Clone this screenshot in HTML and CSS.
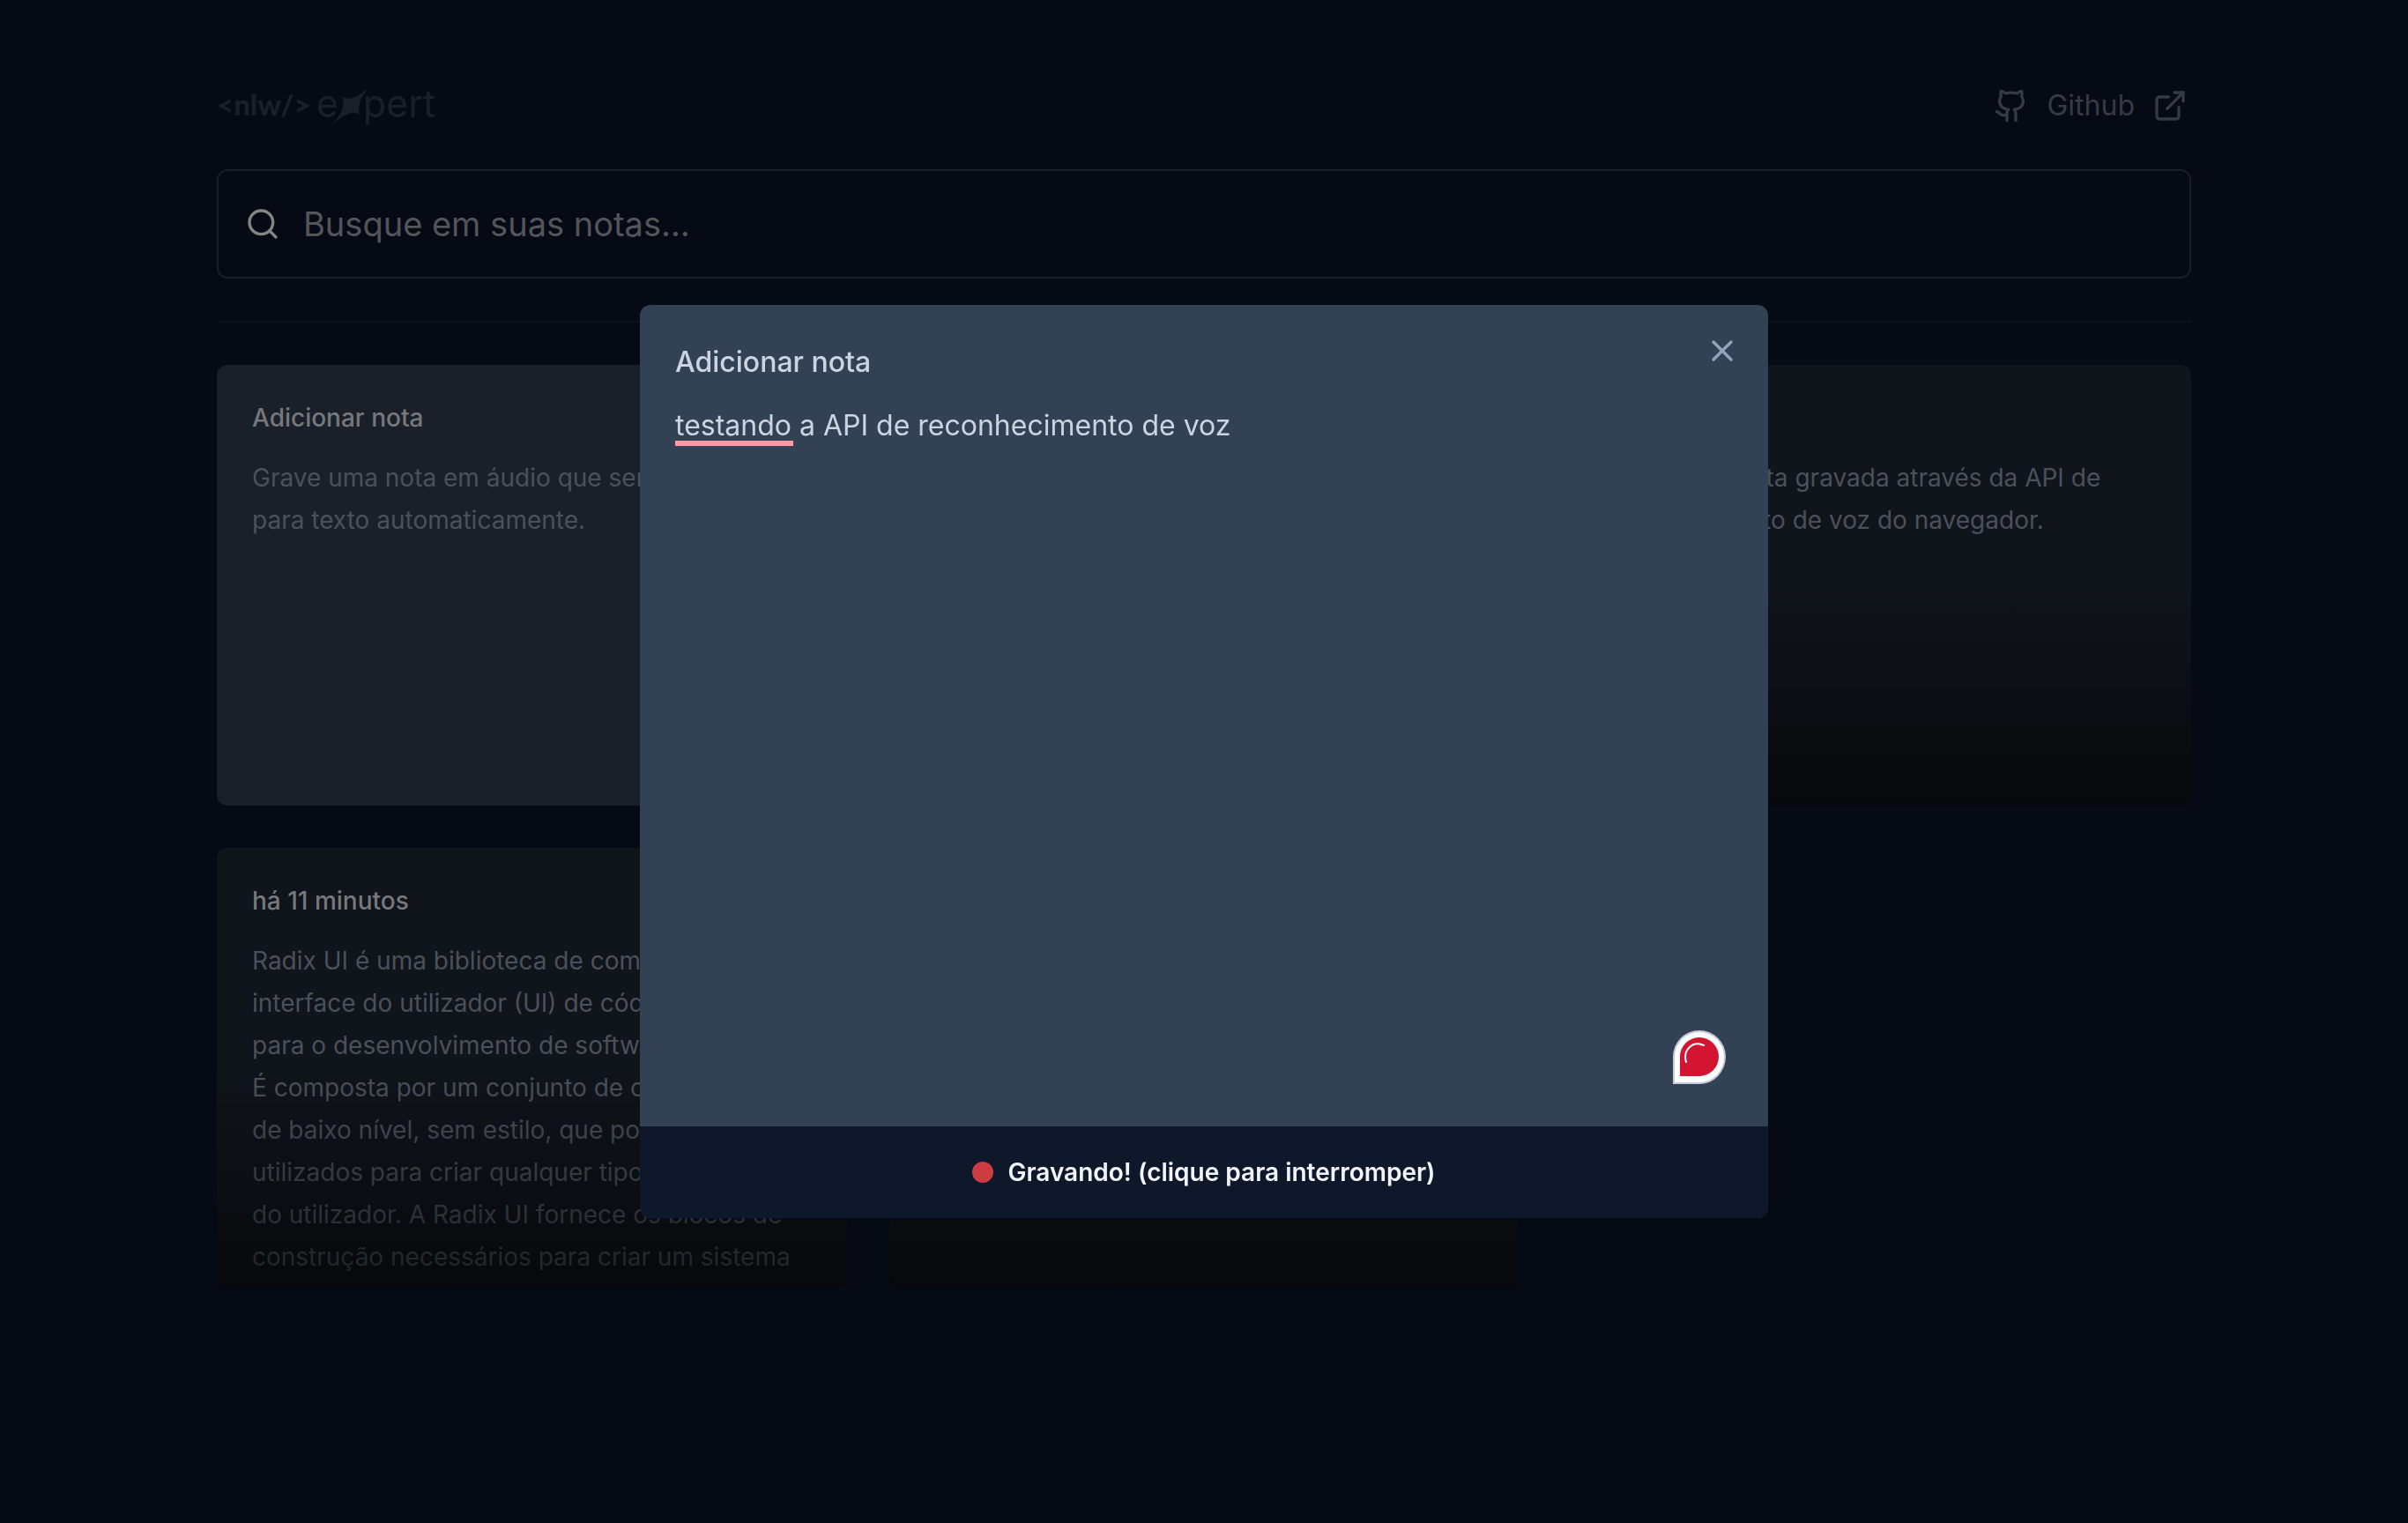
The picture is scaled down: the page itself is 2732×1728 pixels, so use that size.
FILE: index.html
```html
<!DOCTYPE html>
<html lang="pt-BR">
<head>
<meta charset="utf-8">
<meta name="viewport" content="width=device-width, initial-scale=1">
<title>NLW Expert Notes</title>
<link rel="stylesheet" href="styles.css">
</head>
<body>
<div class="page">
  <header class="header">
    <div class="logo">
      <span class="logo-tag">&lt;nlw/&gt;</span>
      <span class="logo-word">
        <span>e</span>
        <svg class="logo-star" viewBox="0 0 130 132" aria-hidden="true"><path d="M130 0Q76 62 98 97Q64 73 0 132Q56 70 33 33Q66 60 130 0Z"/></svg>
        <span>pert</span>
      </span>
    </div>
    <a class="github" href="#">
      <svg class="icon" viewBox="0 0 24 24" aria-hidden="true"><path d="M15 22v-4a4.8 4.8 0 0 0-1-3.5c3 0 6-2 6-5.5.08-1.25-.27-2.48-1-3.5.28-1.15.28-2.35 0-3.5 0 0-1 0-3 1.5-2.64-.5-5.36-.5-8 0C6 2 5 2 5 2c-.3 1.15-.3 2.35 0 3.5A5.403 5.403 0 0 0 4 9c0 3.5 3 5.5 6 5.5-.39.49-.68 1.05-.85 1.65-.17.6-.22 1.23-.15 1.85v4"/><path d="M9 18c-4.51 2-5-2-7-2"/></svg>
      <span>Github</span>
      <svg class="icon" viewBox="0 0 24 24" aria-hidden="true"><path d="M18 13v6a2 2 0 0 1-2 2H5a2 2 0 0 1-2-2V8a2 2 0 0 1 2-2h6"/><path d="M15 3h6v6"/><path d="M10 14 21 3"/></svg>
    </a>
  </header>

  <form class="search">
    <svg class="icon search-icon" viewBox="0 0 24 24" aria-hidden="true"><circle cx="11" cy="11" r="8"/><path d="m21 21-4.300-4.300"/></svg>
    <input class="search-input" type="text" placeholder="Busque em suas notas..." aria-label="Busque em suas notas">
  </form>

  <hr class="divider">

  <main class="grid">
    <article class="card card-new">
      <h2 class="card-title">Adicionar nota</h2>
      <p class="card-text">Grave uma nota em áudio que será convertida para texto automaticamente.</p>
    </article>
    <article class="card card-note">
      <h2 class="card-title">há 1 minuto</h2>
    </article>
    <article class="card card-note">
      <h2 class="card-title">há 5 minutos</h2>
      <p class="card-text">Essa é uma nota gravada através da API de reconhecimento de voz do navegador.</p>
    </article>
    <article class="card card-note">
      <h2 class="card-title">há 11 minutos</h2>
      <p class="card-text">Radix UI é uma biblioteca de componentes de interface do utilizador (UI) de código aberto para o desenvolvimento de software.<br>É composta por um conjunto de componentes de baixo nível, sem estilo, que podem ser utilizados para criar qualquer tipo de interface do utilizador. A Radix UI fornece os blocos de construção necessários para criar um sistema</p>
    </article>
    <article class="card card-note">
      <h2 class="card-title">há 15 minutos</h2>
    </article>
  </main>
</div>

<div class="overlay">
  <section class="modal" role="dialog" aria-modal="true" aria-labelledby="modal-title">
    <button class="close" type="button" aria-label="Fechar">
      <svg class="icon" viewBox="0 0 24 24" aria-hidden="true"><path d="M18 6 6 18"/><path d="m6 6 12 12"/></svg>
    </button>
    <form class="modal-form">
      <div class="modal-body">
        <label class="modal-title" id="modal-title" for="note">Adicionar nota</label>
        <div class="editor">
          <textarea class="note" id="note" spellcheck="false">testando a API de reconhecimento de voz</textarea>
          <span class="misspelling"></span>
          <svg class="checker" viewBox="0 0 60 61" aria-hidden="true">
            <path fill="#c5cad8" d="M0 61V30A30 30 0 0 1 60 30A30 31 0 0 1 30 61Z"/>
            <path fill="#fff" d="M2 59V30A28 28 0 0 1 58 30A28 29 0 0 1 30 59Z"/>
            <path fill="#d31531" d="M8 52V30A22 22 0 0 1 52 30A22 22 0 0 1 30 52Z"/>
            <path fill="none" stroke="#fff" stroke-width="2" stroke-linecap="round" d="M15 36C11 23 22 11 35 17"/>
          </svg>
        </div>
      </div>
      <button class="record" type="button"><span class="dot"></span>Gravando! (clique para interromper)</button>
    </form>
  </section>
</div>
</body>
</html>
```
FILE: styles.css
```css
* {
  box-sizing: border-box;
  margin: 0;
  padding: 0;
}

body {
  min-height: 100vh;
  background: #050a14;
  font-family: Inter, "Liberation Sans", sans-serif;
}

button,
input,
textarea {
  border: 0;
  background: transparent;
  font: inherit;
  outline: none;
}

.page {
  width: 100%;
  max-width: 2304px;
  margin: 0 auto;
  padding: 96px 32px;
  display: flex;
  flex-direction: column;
  gap: 48px;
}

.icon {
  width: 40px;
  height: 40px;
  flex: none;
  fill: none;
  stroke: currentColor;
  stroke-width: 2;
  stroke-linecap: round;
  stroke-linejoin: round;
}

/* header */
.header {
  height: 48px;
  display: flex;
  align-items: center;
  justify-content: space-between;
}

.logo {
  display: flex;
  align-items: center;
  gap: 6px;
  color: #1a1f28;
  line-height: 44px;
}

.logo-tag {
  padding-bottom: 4px;
  font-family: Lato, sans-serif;
  font-size: 33px;
  font-weight: 900;
}

.logo-word {
  display: flex;
  align-items: center;
  padding-bottom: 6px;
  font-size: 43px;
  font-weight: 400;
}

.logo-star {
  width: 44px;
  height: 44px;
  margin: 6px -8px 0;
  fill: currentColor;
}

.github {
  display: flex;
  align-items: center;
  gap: 20px;
  padding: 0 4px;
  color: #353b45;
  font-size: 32px;
  line-height: 48px;
  text-decoration: none;
}

/* search */
.search {
  display: flex;
  align-items: center;
  gap: 26px;
  padding: 32px 30px;
  border: 2px solid #1a1e27;
  border-radius: 12px;
}

.search-icon {
  color: #858585;
}

.search-input {
  flex: 1;
  min-width: 0;
  height: 56px;
  font-size: 38px;
  line-height: 56px;
  color: #858585;
}

.search-input::placeholder {
  color: #53555a;
  opacity: 1;
}

.divider {
  height: 2px;
  border: 0;
  background: #0f131c;
}

/* cards */
.grid {
  display: grid;
  grid-template-columns: repeat(3, minmax(0, 1fr));
  grid-auto-rows: 500px;
  gap: 48px;
}

.card {
  position: relative;
  overflow: hidden;
  display: flex;
  flex-direction: column;
  gap: 24px;
  padding: 40px;
  border-radius: 12px;
}

.card-new {
  background: #1a2029;
}

.card-note {
  background: #10141b;
}

.card-note::after {
  content: "";
  position: absolute;
  inset: 50% 0 0;
  background: linear-gradient(to top, rgba(0, 0, 0, 0.6), rgba(0, 0, 0, 0));
}

.card-title {
  font-size: 28px;
  line-height: 40px;
  font-weight: 500;
  color: #76787b;
}

.card-text {
  font-size: 28px;
  line-height: 48px;
  color: #4a515b;
}

/* modal */
.overlay {
  position: fixed;
  inset: 0;
  display: flex;
  align-items: center;
  justify-content: center;
}

.modal {
  position: relative;
  width: 100%;
  max-width: 1280px;
  height: 60vh;
  overflow: hidden;
  border-radius: 12px;
  background: #334155;
}

.close {
  position: absolute;
  top: 0;
  right: 0;
  z-index: 1;
  display: flex;
  padding: 32px;
  color: #94a3b8;
}

.modal-form {
  height: 100%;
  display: flex;
  flex-direction: column;
}

.modal-body {
  flex: 1;
  display: flex;
  flex-direction: column;
  gap: 24px;
  padding: 41px 40px 40px;
}

.modal-title {
  font-size: 32px;
  line-height: 48px;
  font-weight: 500;
  color: #cbd5e1;
}

.editor {
  position: relative;
  flex: 1;
  display: flex;
}

.note {
  flex: 1;
  resize: none;
  font-size: 32px;
  line-height: 48px;
  color: #cbd5e1;
}

.misspelling {
  position: absolute;
  top: 41px;
  left: 0;
  width: 134px;
  height: 6px;
  background: #ff99a8;
}

.checker {
  position: absolute;
  right: 8px;
  bottom: 8px;
  width: 60px;
  height: 61px;
}

.record {
  display: flex;
  align-items: center;
  justify-content: center;
  gap: 16px;
  padding: 32px;
  background: #0f172a;
  color: #f1f5f9;
  font-size: 28px;
  line-height: 40px;
  font-weight: 600;
}

.dot {
  width: 24px;
  height: 24px;
  border-radius: 50%;
  background: #cb3d40;
}
```
